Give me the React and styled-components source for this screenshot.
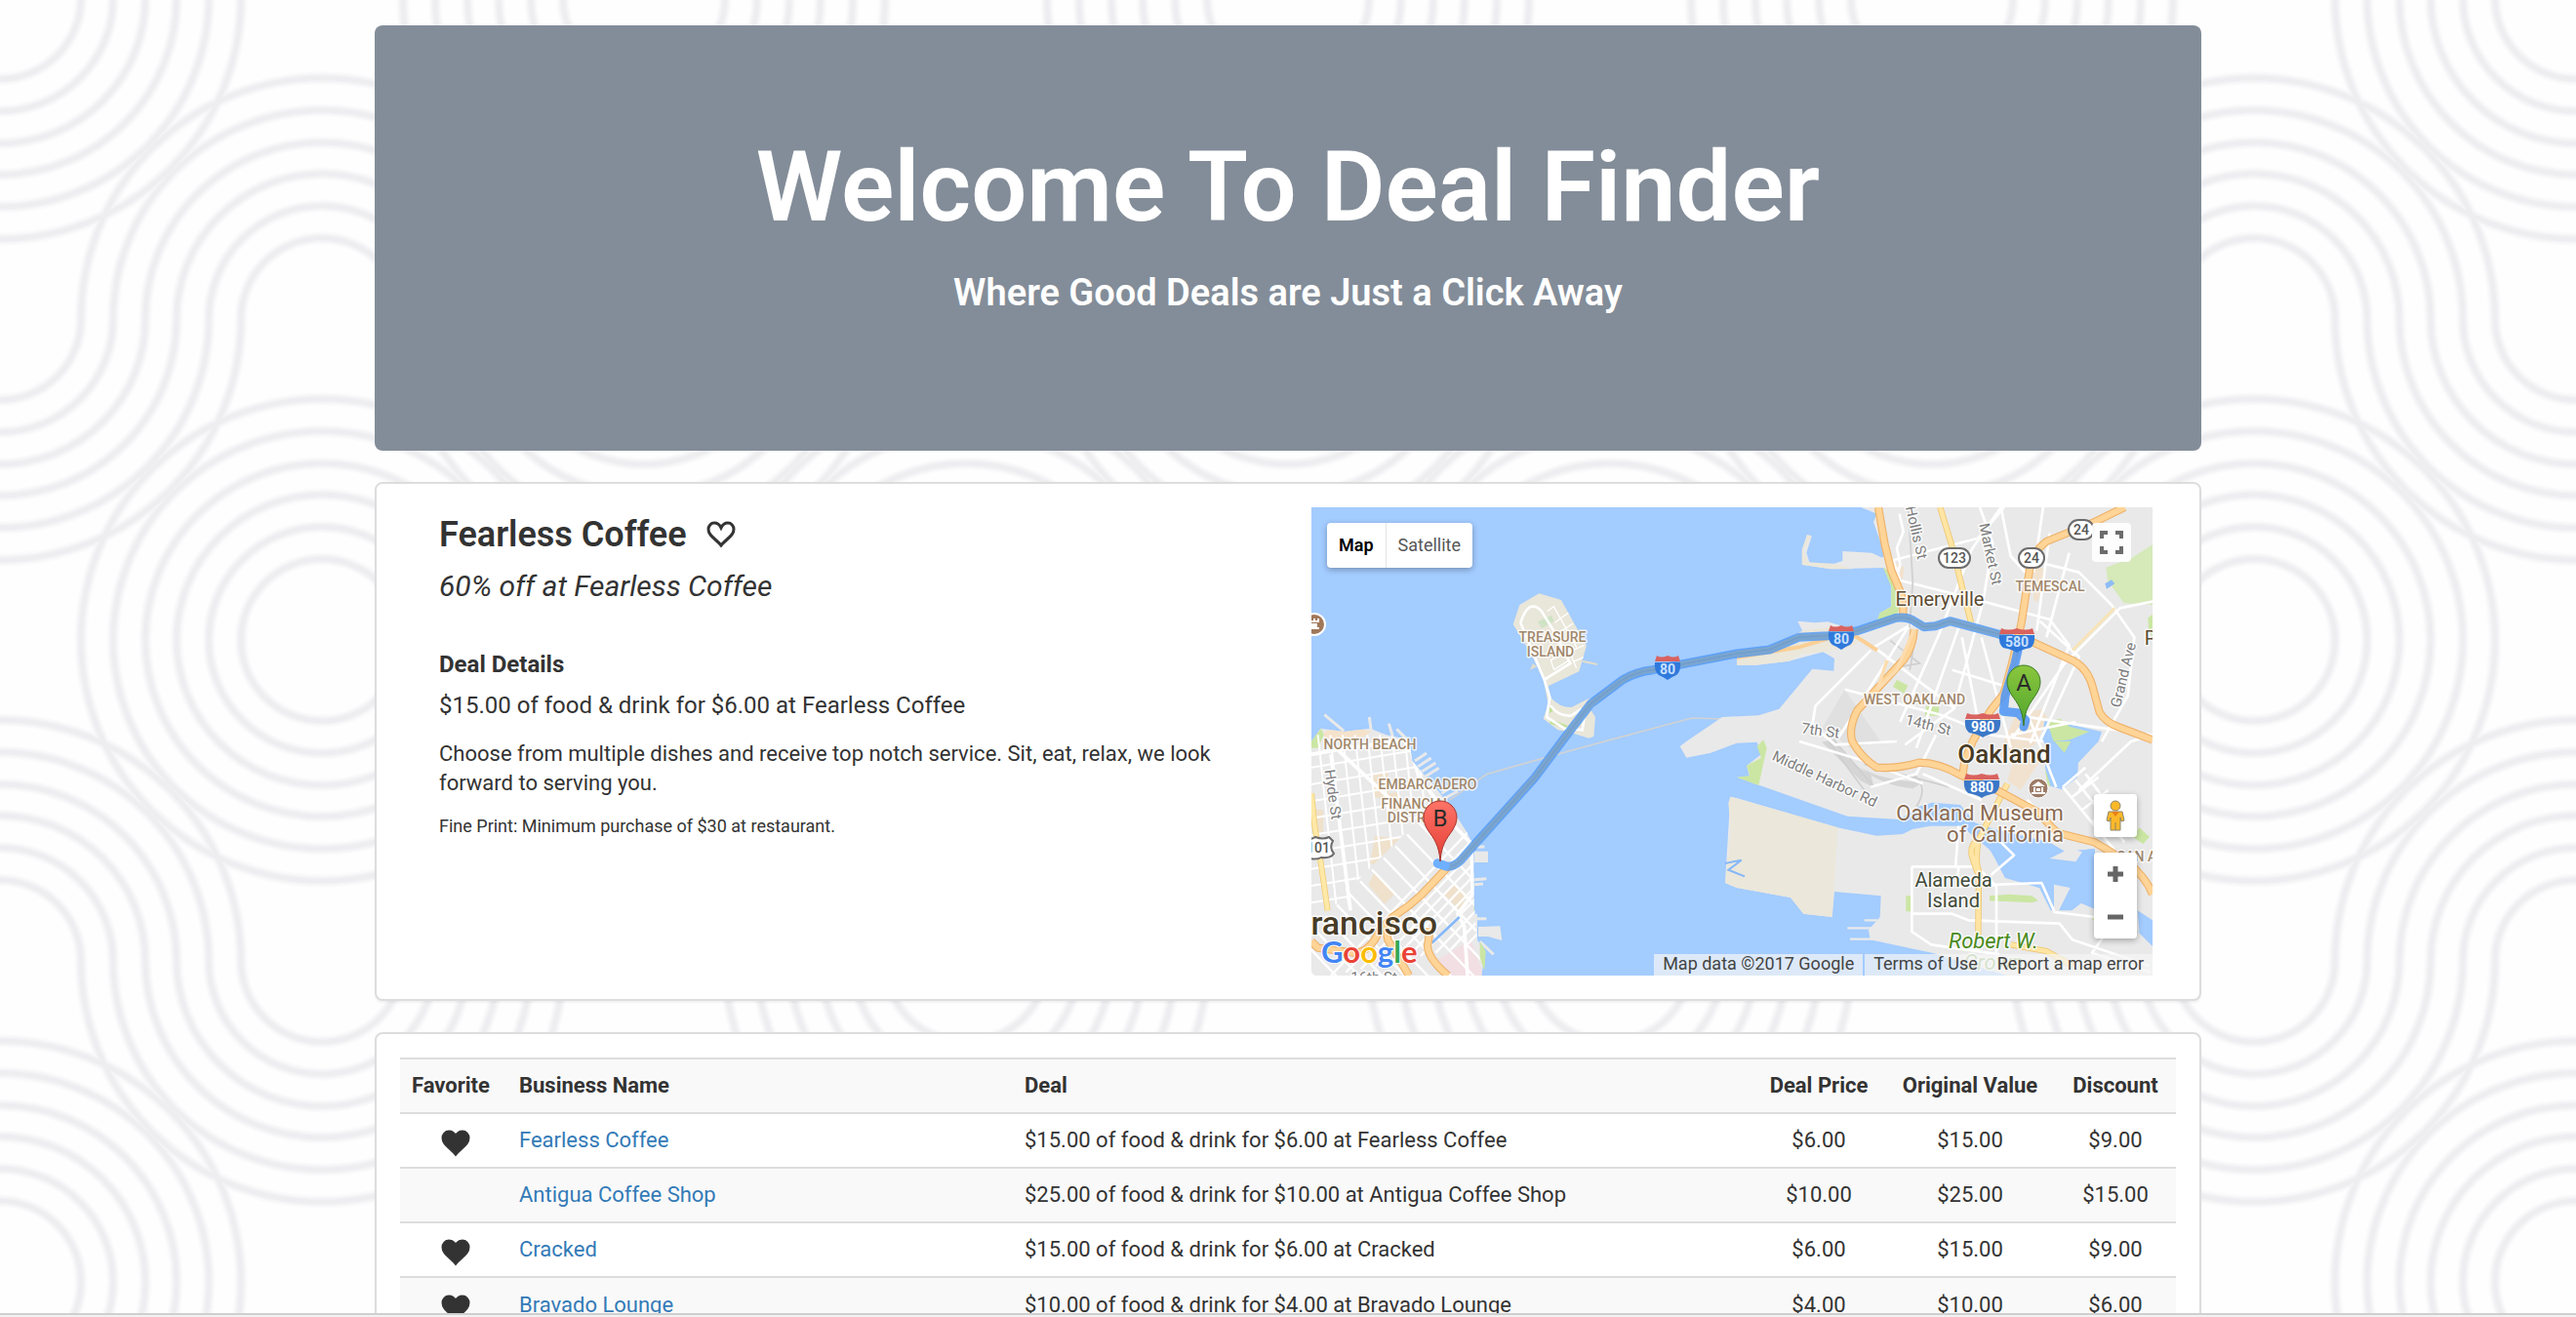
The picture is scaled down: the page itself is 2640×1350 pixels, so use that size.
import React, { useState } from "react";
import styled, { createGlobalStyle } from "styled-components";

const GlobalStyle = createGlobalStyle`
  *, *::before, *::after { box-sizing: border-box; }
  body {
    margin: 0;
    font-family: Roboto, "Liberation Sans", sans-serif;
    color: #333;
    background: #fefefe;
  }
  h1, h2, h3, h4, p { margin: 0; }
`;

const Window = styled.div`
  position: relative;
  height: 100vh;
  display: flex;
  flex-direction: column;
`;

const Backdrop = styled.svg`
  position: absolute;
  inset: 0;
  width: 100%;
  height: 100%;
`;

const Viewport = styled.div`
  position: relative;
  flex: 1;
  min-height: 0;
  overflow: hidden;
`;

const StatusEdge = styled.div`
  position: relative;
  height: 4px;
  border-top: 2px solid #cfcfcf;
  background: #f2f2f2;
`;

const Container = styled.main`
  max-width: 1872px;
  margin: 0 auto;
  padding-top: 26px;
  display: flex;
  flex-direction: column;
  gap: 32px;
`;

const Hero = styled.header`
  padding: 110px 48px 140px;
  border-radius: 8px;
  background: #838d99;
  color: #fff;
  text-align: center;
  display: flex;
  flex-direction: column;
  gap: 30px;
`;

const HeroTitle = styled.h1`
  font-size: 101px;
  line-height: 112px;
  font-weight: 600;
`;

const HeroSubtitle = styled.h2`
  font-size: 38px;
  line-height: 44px;
  font-weight: 600;
`;

const Card = styled.section`
  padding: 24px;
  border: 2px solid #ddd;
  border-radius: 8px;
  background: #fff;
  box-shadow: 0 2px 2px rgba(0, 0, 0, 0.05);
`;

const DealGrid = styled.div`
  display: grid;
  grid-template-columns: 1fr 1fr;
  gap: 48px;
  padding: 0 24px;
`;

const DealInfo = styled.div`
  padding: 8px 16px 0;
`;

const DealHeading = styled.div`
  display: flex;
  align-items: center;
  gap: 20px;
  margin-bottom: 16px;
`;

const DealName = styled.h3`
  font-size: 36px;
  line-height: 40px;
  font-weight: 600;
`;

const HeartButton = styled.button`
  display: inline-flex;
  padding: 0;
  border: 0;
  background: none;
  color: #333;
  cursor: pointer;
  vertical-align: middle;
`;

const DealTagline = styled.p`
  font-size: 30px;
  line-height: 34px;
  font-style: italic;
  margin-bottom: 50px;
`;

const DetailsTitle = styled.h4`
  font-size: 24px;
  line-height: 26px;
  font-weight: 700;
  margin-bottom: 16px;
`;

const DealOffer = styled.p`
  font-size: 24px;
  line-height: 26px;
  margin-bottom: 22px;
`;

const DealText = styled.p`
  font-size: 22px;
  line-height: 30px;
  margin-bottom: 16px;
`;

const FinePrint = styled.p`
  font-size: 18px;
  line-height: 26px;
`;

const MapFrame = styled.div`
  position: relative;
  height: 480px;
  overflow: hidden;
  background: #a3ccff;
`;

const MapCanvas = styled.svg`
  display: block;
  width: 100%;
  height: 100%;
`;

const MapTypes = styled.div`
  position: absolute;
  left: 16px;
  top: 16px;
  display: flex;
  border-radius: 4px;
  background: #fff;
  box-shadow: 0 2px 6px rgba(0, 0, 0, 0.3);
`;

const MapTypeButton = styled.button`
  height: 46px;
  padding: 0 12px 2px;
  border: 0;
  border-left: ${(p) => (p.$divided ? "1px solid #e4e4e4" : "0")};
  background: none;
  font-family: inherit;
  font-size: 18px;
  font-weight: ${(p) => (p.$active ? 600 : 400)};
  color: ${(p) => (p.$active ? "#000" : "#565656")};
`;

const MapButton = styled.button`
  width: ${(p) => p.$size}px;
  height: ${(p) => p.$size}px;
  padding: 0;
  border: 0;
  border-radius: 4px;
  background: #fff;
  display: flex;
  align-items: center;
  justify-content: center;
`;

const FullscreenSlot = styled.div`
  position: absolute;
  right: 22px;
  top: 16px;
  opacity: 0.95;
`;

const SideControls = styled.div`
  position: absolute;
  right: 16px;
  bottom: 38px;
  display: flex;
  flex-direction: column;
  gap: 16px;
`;

const ControlGroup = styled.div`
  border-radius: 4px;
  background: #fff;
  box-shadow: 0 2px 6px rgba(0, 0, 0, 0.3);
`;

const Attribution = styled.div`
  position: absolute;
  right: 0;
  bottom: 0;
  display: flex;
  gap: 2px;
  font-size: 18px;
  line-height: 20px;
  color: #444;
`;

const AttributionCell = styled.span`
  display: flex;
  gap: 20px;
  padding: 0 9px 2px;
  background: rgba(245, 245, 245, 0.7);
`;

const AttributionLink = styled.a`
  color: inherit;
  text-decoration: none;
`;

const DealTable = styled.table`
  width: 100%;
  table-layout: fixed;
  border-collapse: collapse;
  font-size: 22px;
  line-height: 30px;
`;

const Column = styled.col`
  width: ${(p) => p.$width};
`;

const Row = styled.tr`
  border-top: 2px solid #ddd;
  &:nth-child(odd) { background: ${(p) => (p.$head ? "#f9f9f9" : "transparent")}; }
  &:nth-child(even) { background: #f9f9f9; }
`;

const HeadCell = styled.th`
  height: 56px;
  padding: 12px;
  text-align: ${(p) => (p.$center ? "center" : "left")};
  font-weight: 700;
  white-space: nowrap;
`;

const Cell = styled.td`
  height: 56px;
  padding: 12px;
  text-align: ${(p) => (p.$center ? "center" : "left")};
`;

const HeartCell = styled(Cell)`
  padding: 4px 8px 0 12px;
  text-align: center;
`;

const BusinessLink = styled.a`
  color: #337ab7;
  text-decoration: none;
`;

/* ---------- page backdrop ---------- */

const RINGS = [83, 116, 149, 181, 214, 247];
const STEP = 329;
const topArc = (x, y, r) => `M${x - r} ${y}A${r} ${r} 0 0 1 ${x + r} ${y}`;
const bottomArc = (x, y, r) => `M${x - r} ${y}A${r} ${r} 0 0 0 ${x + r} ${y}`;

const wavePath = RINGS.map((r) =>
  [0, 660]
    .map(
      (x) =>
        bottomArc(x, 0, r) +
        bottomArc(x, STEP, r) +
        topArc(x, STEP * 3, r) +
        topArc(x, STEP * 4, r)
    )
    .join("") +
  topArc(330, STEP, r) +
  topArc(330, STEP * 2, r) +
  bottomArc(330, STEP * 2, r) +
  bottomArc(330, STEP * 3, r)
).join("");

function Waves() {
  return (
    <Backdrop aria-hidden="true">
      <defs>
        <pattern id="waves" width="660" height={STEP * 4} y="-2" patternUnits="userSpaceOnUse">
          <g fill="none" stroke="#8a9498">
            <path d={wavePath} strokeWidth="13" strokeOpacity="0.03" />
            <path d={wavePath} strokeWidth="9" strokeOpacity="0.05" />
            <path d={wavePath} strokeWidth="5" strokeOpacity="0.05" />
          </g>
        </pattern>
      </defs>
      <rect width="100%" height="100%" fill="url(#waves)" />
    </Backdrop>
  );
}

/* ---------- icons ---------- */

const HEART =
  "M15 25C12 21 7 18 4 14C2.500 12 2 10.500 2 8.500C2 5 4.600 2 8 2C11.200 2 13.600 4 15 7C16.400 4 18.800 2 22 2C25.400 2 28 5 28 8.500C28 10.500 27.500 12 26 14C23 18 18 21 15 25Z";

function Heart({ filled }) {
  return (
    <svg width="30" height="28" viewBox="0 0 30 28" aria-hidden="true">
      <path
        d={HEART}
        fill={filled ? "currentColor" : "none"}
        stroke="currentColor"
        strokeWidth="3"
      />
    </svg>
  );
}

/* ---------- map ---------- */

const HALO = { stroke: "#fff", strokeOpacity: 0.8, strokeWidth: 3, strokeLinejoin: "round", paintOrder: "stroke" };

const MapLabel = styled.text`
  font-family: Roboto, "Liberation Sans", sans-serif;
  font-size: ${(p) => p.$size}px;
  font-weight: ${(p) => p.$weight || 400};
  font-style: ${(p) => (p.$italic ? "italic" : "normal")};
  fill: ${(p) => p.$color};
`;

const LABELS = [
  ["TREASURE", 247, 138, 14, "#a1876a", 500],
  ["ISLAND", 245, 153, 14, "#a1876a", 500],
  ["NORTH BEACH", 60, 248, 14, "#a1876a", 500],
  ["EMBARCADERO", 119, 289, 14, "#a1876a", 500],
  ["FINANCIAL", 107, 309, 14, "#a1876a", 500],
  ["DISTRICT", 108, 323, 14, "#a1876a", 500],
  ["TEMESCAL", 757, 86, 14, "#a1876a", 500],
  ["WEST OAKLAND", 618, 202, 14, "#a1876a", 500],
  ["SAN A", 846, 363, 14, "#a1876a", 500],
  ["Emeryville", 644, 101, 20, "#5b4a33", 400],
  ["P", 860, 141, 20, "#5b4a33", 400],
  ["Oakland", 710, 262, 26, "#473b26", 500],
  ["Oakland Museum", 685, 321, 22, "#8a6a52", 400],
  ["of California", 711, 343, 22, "#8a6a52", 400],
  ["Alameda", 658, 389, 20, "#3f4a38", 400],
  ["Island", 658, 410, 20, "#3f4a38", 400],
  ["Robert W.", 699, 452, 22, "#4a8a20", 400, true],
  ["Crown", 699, 474, 22, "#8db573", 400, true],
];

const STREET_LABELS = [
  ["Hyde St", 17, 295, 82],
  ["Hollis St", 615, 27, 77],
  ["Market St", 691, 49, 78],
  ["Grand Ave", 837, 173, -76],
  ["7th St", 521, 234, 8],
  ["14th St", 631, 228, 14],
  ["Middle Harbor Rd", 524, 283, 25],
  ["16th St", 64, 487, 0],
];

/* Street geometry is stored at three units to the pixel. */
const diagonalStreets = [
  ...Array.from({ length: 12 }, (_, i) => `M${60 + i * 46} ${1440 - i * 10}l420 -440`),
  ...Array.from({ length: 13 }, (_, i) => `M${330 - i * 36} ${970 + i * 36}l330 345`),
].join("");

const uprightStreets = [
  ...Array.from({ length: 9 }, (_, i) => `M${20 + i * 38} 700l56 520`),
  ...Array.from({ length: 9 }, (_, i) => `M0 ${800 + i * 52}l360 -60`),
].join("");

const eastStreets =
  "M1808 20l12 55-20 50 10 50-15 60 40 50M1780 165l270-70 80-95M2120 0l-90 130-100 260-120 270M2120 0l30 150 90 100" +
  "M2055 0l40 110-30 180-90 330-150 110M1980 620L1730 430l130-80M1790 165l20 60 240 60 220 60 60 80-120 300" +
  "M2240 170l120 30 100 100 70 100-20 180-80 140M2586 290l-100 20-170 170-160 230M2240 350l120 110-120 260" +
  "M1720 440L1550 610l-10 60 70 60 190-10M1840 360l-220 350M2000 400l60 310M1990 370l-130 370M2060 400l90 340" +
  "M2170 640l200 30 216 30M2150 700l200-40M2270 80l-40 300M2250 0l-30 200M2330 140l-70 260M2180 580l110 280" +
  "M1640 560l300 80 150 60 160 20M1970 500l260 80M1720 860l140-40 60-120M1880 820l180 80M1500 720l200 60 180 70" +
  "M1990 980l-10 130M1846 1105h200l60 60v240M1846 1105v200l60 40 210 30M1850 1250h120l50 20 280 10 40 50 236 80" +
  "M1990 1105l-5 60 260-10 40 90 250 30M2120 1030l40 40-70 60M2200 900l120 120M2310 860l180 220M2350 840l150 190" +
  "M2380 820l120 160M2310 860l70-60M2340 890l80-60M2370 930l80-60M2400 970l80-60M2360 870l160-150 66-20M2450 1300l-50 70 180 60";

const HIGHWAYS = [
  "M1743 0L1763 115L1783 195L1813 265Q1822 300 1818 335",
  "M2500 0L2408 45L2260 105Q2215 140 2210 180L2183 355L2153 485L2128 575L2088 625L2033 720L2008 780L2003 820",
  "M2180 400L2218 415L2348 475Q2390 500 2404 560L2423 630Q2440 660 2480 675L2586 715",
  "M1853 375Q1850 430 1820 470L1678 625Q1650 680 1663 720Q1690 770 1738 800Q1800 805 1868 785Q1930 785 1998 825L2108 870L2238 940Q2290 1005 2308 1005L2408 1030L2508 1090Q2568 1140 2586 1190",
  "M425 1100L340 1190L300 1225L250 1260Q225 1290 235 1330L300 1440",
  "M250 1260L210 1300Q180 1370 130 1370L20 1355L0 1335",
  "M365 1295L357 1350Q360 1390 420 1440",
];

const ROUTE =
  "M388 1095L418 1105Q440 1105 460 1085L508 1030L688 830L770 720L858 605L958 530Q1000 505 1050 500L1308 450L1408 438L1498 400L1588 395L1678 380L1798 340Q1825 336 1845 345L1883 368L1918 365L1963 350L2113 390L2170 410";

function Interstate({ x, y, n, lit }) {
  const w = n.length > 2 ? 18 : 13;
  return (
    <g transform={`translate(${x} ${y})`}>
      <path
        d={`M${-w} -5Q${-w - 1} 4 ${-w + 4} 8Q-4 10 0 13Q4 10 ${w - 4} 8Q${w + 1} 4 ${w} -5Z`}
        fill={lit ? "#2f79dc" : "#3b78c8"}
      />
      <path d={`M${-w} -6L${-w + 2} -12Q${-w / 2} -9 0 -12Q${w / 2} -9 ${w - 2} -12L${w} -6Z`} fill="#d9625f" />
      <MapLabel y="7" textAnchor="middle" $size={14} $weight={700} $color={lit ? "#c9e0ff" : "#fff"}>
        {n}
      </MapLabel>
    </g>
  );
}

function StateRoute({ x, y, n }) {
  const w = n.length > 2 ? 32 : 26;
  return (
    <g transform={`translate(${x} ${y})`}>
      <rect x={-w / 2} y="-10" width={w} height="20" rx="10" fill="#fff" stroke="#6c6c6c" strokeWidth="2" />
      <MapLabel y="5" textAnchor="middle" $size={14} $weight={500} $color="#555">
        {n}
      </MapLabel>
    </g>
  );
}

function Marker({ x, y, letter, fill, light, edge }) {
  const id = `pin-${letter}`;
  return (
    <g transform={`translate(${x} ${y})`}>
      <linearGradient id={id} x1="0" y1="0" x2="0" y2="1">
        <stop offset="0" stopColor={light} />
        <stop offset="1" stopColor={fill} />
      </linearGradient>
      <path
        d="M0 45C-1 28 -7 21 -12 14C-15 9 -17 5 -17 0A17 17 0 0 1 17 0C17 5 15 9 12 14C7 21 1 28 0 45Z"
        fill={`url(#${id})`}
        stroke={edge}
        strokeWidth="1"
      />
      <MapLabel y="9" textAnchor="middle" $size={24} $color="#2b2b2b">
        {letter}
      </MapLabel>
    </g>
  );
}

function BayMap() {
  return (
    <MapCanvas viewBox="0 0 862 480" preserveAspectRatio="xMidYMid slice" role="img" aria-label="Route map">
      <defs>
        <clipPath id="city">
          <path d="M0 720L28 680L100 690L180 680L230 700L300 715L310 780L388 870L428 920L478 1000L498 1040L500 1220L510 1330L533 1370L523 1440H0Z" />
        </clipPath>
      </defs>
      <rect width="862" height="480" fill="#a3ccff" />
      <g transform="scale(0.33333)">
        {/* San Francisco */}
        <path
          d="M0 720L28 680L100 690L180 680L230 700L300 715L310 780L388 870L428 920L478 1000L498 1040L500 1220L468 1252L510 1250L510 1330L533 1370L523 1440H0Z"
          fill="#e9e9e9"
        />
        <path
          d="M500 1058h43v34h-43zM513 1290l67-2 6 44-43-12h-30z"
          fill="#e9e9e9"
        />
        <path
          d="M40 638l60 50M178 645l6 45M238 665l12 40M262 682l40 40M318 780l36-24M328 797l40-26M340 812l42-26M350 828l42-26M400 880l36-24M410 895l40-22M500 1044h32M500 1145l38-3M500 1160l28-2M508 1265h30M518 1335l42 40"
          stroke="#e9e9e9"
          strokeWidth="9"
        />
        <g clipPath="url(#city)">
          <path d="M38 690L110 672L185 690L150 712H40Z" fill="#f5e2cb" />
          <path d="M0 715L30 680L38 700L20 740H0Z" fill="#cbe6a3" />
          <path d="M190 820l45-10 5 90-50-10zM195 1010l90 10 20 50-40 45-85-20zM8 930h28v70H8zM388 1200l40-30 40 30-20 60-60-30zM240 880l30-5v60h-30z" fill="#efe1cb" />
          <path d="M460 1240l30-40 20 20-8 30z" fill="#d5e6cd" />
          <path d="M390 1390l100-60 40 110H400z" fill="#f2dfe4" />
          <path d={uprightStreets} stroke="#fff" strokeWidth="6" fill="none" />
          <path d="M320 970L498 1040V1250L440 1260L300 1440H60L130 1160Z" fill="#e9e9e9" />
          <path d="M195 1120l60 70-30 30-50-60zM408 1190l30-30 40 30-20 50z" fill="#efe1cb" />
          <path d={diagonalStreets} stroke="#fff" strokeWidth="7" fill="none" />
          <path d="M0 760L80 745L240 895M80 745L298 715L330 830L388 905L420 960L492 1035L496 1190L450 1250L470 1290L480 1440M60 760L120 1240" fill="none" stroke="#fff" strokeWidth="11" />
          <path d="M0 880L10 980L30 1100L50 1240" fill="none" stroke="#f1cc75" strokeWidth="18" />
          <path d="M0 880L10 980L30 1100L50 1240" fill="none" stroke="#ffe9a8" strokeWidth="13" />
          <path d="M370 1340L455 1260" stroke="#85b8f8" strokeWidth="8" />
        </g>
        <path d="M518 1335l18 30-4 60-14-40z" fill="#cbe6a3" />
        <path d="M425 900L540 820L700 775L908 718L1170 648L1310 652" fill="none" stroke="#cfd2d4" strokeWidth="5" />

        {/* Treasure Island */}
        <path
          d="M700 265L768 285L846 425L823 505L728 550L736 585Q760 615 800 615L848 590L898 580L860 625L873 645L868 705L853 710L788 690L758 685L713 650L728 605L713 530L678 455L620 360L640 300Z"
          fill="#e9e6da"
        />
        <path d="M672 500l8-20 14 10zM835 470l45 10-3 6-45-10z" fill="#e0dccd" />
        <path d="M696 352l26-12 12 18-26 14zM722 340l16-8 8 20-14 6z" fill="#cfe3c4" />
        <path d="M732 650l56 22-4 8-50-14zM733 610l10 16-12 8z" fill="#c0e095" />
        <path d="M643 355Q655 318 670 308Q690 298 708 320L748 385L796 480L716 530L643 355M716 530L733 585L723 645L778 680L833 685L840 640M735 610Q760 645 800 640L830 620" fill="none" stroke="#fff" strokeWidth="8" />
        <path d="M725 320l20-15 70 125M748 355l42-30M762 385l42-28M776 415l44-26M790 445l48-20M806 475l30-14M815 495l-25-60M745 500l45-28-14-22-40 20 10 30" fill="none" stroke="#fff" strokeWidth="4" />

        {/* East Bay */}
        <path
          d="M1690 0L1738 20L1728 45L1763 145L1755 155L1723 140L1633 135V165L1608 173L1533 175L1522 140L1538 90L1523 85L1512 135L1513 177L1598 190L1758 186L1773 205L1783 245V305L1748 325L1738 355L1708 370L1663 375L1588 352L1548 355L1495 350L1512 385L1445 415L1308 455V485L1368 485L1468 473L1573 445L1608 465L1606 503L1540 497L1438 620L1375 640L1263 645L1153 720L1133 735L1153 770L1228 755L1308 725L1370 722L1383 760L1338 795L1348 830L1308 830L1378 855L1648 950L1808 960L1868 920L1908 908L1995 915L2040 970L2100 990L2268 1030L2318 1060L2408 1050L2420 1240L2586 1330V0Z"
          fill="#e9e9e9"
        />
        <path d="M1308 485L1308 463L1408 435L1508 380L1588 370L1688 385L1673 425L1573 445L1508 450L1468 473L1368 485Z" fill="#ebe7da" />
        <path d="M1512 135l26-48-14-2-16 45v47l90 13h70l-60-16-80-5z" fill="#ebe7da" />
        <path d="M1758 186L1783 245V305L1748 325L1738 350L1800 335L1813 290L1790 200Z" fill="#cbe6a3" />
        <path d="M1308 830L1348 825L1338 795L1383 770L1370 735L1390 715L1400 740L1375 855Z" fill="#cbe6a3" />
        <path d="M2586 115L2523 155L2443 185L2448 225L2498 295L2586 300Z" fill="#d5e9b9" />
        <path d="M2440 235l20-12 10 12-25 16z" fill="#8dbcf5" />
        <path d="M1800 530l34 18-12 24-34-20zM1890 612l40 2-2 28-42-2zM2545 985l32 28-20 22-30-20zM2572 340l14-10v70l-12-20z" fill="#cbe6a3" />
        <path d="M1785 165l38 20-8 55-30-20zM2165 640l80-20 20 30-40 80-100 50-10-30zM2220 180l40 10-26 100-14-4zM2170 740l70 40-60 90-40-30z" fill="#f1e2cf" />
        <path d="M1640 560l110 160-90 20-90-60z" fill="#dfe0df" />
        <path d="M1570 722q60 60 120 120l40 20-10-40q-80-40-110-110zM1690 800q60 40 190 45l-30 20q-100-10-160-65z" fill="#d5d5d5" />
        <path d="M1590 720l110 150M1610 720l120 140M1700 790l260 70M1860 920q40-60-10-100M1780 410l90 70-60 10M1850 440l-10 60" fill="none" stroke="#cfcfcf" strokeWidth="5" />

        {/* Alameda */}
        <path
          d="M1308 895L1618 985L1738 1010L1818 1005L1848 990L1903 980L1998 980L2088 1055L2133 1140L2238 1170L2273 1240L2338 1240L2370 1215L2586 1330V1440H2138L2008 1400L1908 1370L1718 1330L1713 1300L1748 1260L1751 1195L1608 1182L1601 1260L1513 1250L1473 1200L1308 1170L1272 1155L1288 890Z"
          fill="#e9e9e9"
        />
        <path d="M1288 890L1308 895L1618 985L1601 1260L1513 1250L1473 1200L1308 1170L1272 1155L1290 1000L1282 910Z" fill="#ebe7da" />
        <path d="M1272 1095l50-10-40 30 50 20" fill="none" stroke="#85b8f8" strokeWidth="6" />
        <path d="M1648 1294h80M1656 1328h80M1700 1270h40" stroke="#e9e9e9" strokeWidth="7" />
        <path d="M2083 1050L2130 1010L2268 1030L2318 1060L2408 1050L2420 1240L2372 1220L2300 1180L2238 1170L2170 1150L2133 1120Z" fill="#a3ccff" />
        <path d="M2270 1080l60-30 40 10-20 30zM2283 1160l50 10-40 80-10-5z" fill="#e9e9e9" />
        <path d="M2085 1195l60-5 70 5 20 15-20 6-130-6zM1828 1195h18v48h-18zM2400 1250l10 20-8-2z" fill="#cbe6a3" />
        <path d="M2540 1240l46 30v80l-40-40z" fill="#a3ccff" />
        <path d="M2255 650L2300 660L2430 690L2420 720L2358 785L2355 830L2308 868L2265 855L2256 800L2262 740L2246 710Z" fill="#a3ccff" />
        <path d="M2262 660l40-10 30 25 60 15-60 25-50 5z" fill="#cbe6a3" />
        <path d="M2285 720h50l-20 35zM2255 800l8 55 10 4z" fill="#cbe6a3" />

        <path d={eastStreets} fill="none" stroke="#fff" strokeWidth="8" strokeLinejoin="round" />
        <path d="M1835 0l14 230-10 140" fill="none" stroke="#d3d3d3" strokeWidth="6" />
        <path d="M2340 440l130-130" stroke="#f8e4b8" strokeWidth="9" />
        <path d="M1933 0L1968 115L2028 355M2140 850L2050 1025Q2040 1090 2052 1120L2050 1320M2060 1020Q2025 1030 2030 1070Q2045 1120 2052 1130M2150 1345L2260 1365L2340 1410" fill="none" stroke="#edc673" strokeWidth="19" />
        <path d="M1933 0L1968 115L2028 355M2140 850L2050 1025Q2040 1090 2052 1120L2050 1320M2060 1020Q2025 1030 2030 1070Q2045 1120 2052 1130M2150 1345L2260 1365L2340 1410" fill="none" stroke="#ffe5a3" strokeWidth="14" />

        {HIGHWAYS.map((d) => (
          <path key={d} d={d} fill="none" stroke="#eeb36c" strokeWidth="25" strokeLinejoin="round" />
        ))}
        {HIGHWAYS.map((d) => (
          <path key={d} d={d} fill="none" stroke="#ffd497" strokeWidth="18" strokeLinejoin="round" />
        ))}
        <path d="M1308 462L1500 430L1600 400L1670 395L1740 440" fill="none" stroke="#fbcf94" strokeWidth="12" />
        <path d="M1853 375L1800 500L1740 560L1770 470" fill="none" stroke="#fcdcae" strokeWidth="10" />
      </g>

      {LABELS.map(([text, x, y, size, color, weight, italic]) => (
        <MapLabel key={text} x={x} y={y} textAnchor="middle" $size={size} $color={color} $weight={weight} $italic={italic} {...HALO}>
          {text}
        </MapLabel>
      ))}
      {STREET_LABELS.map(([text, x, y, angle]) => (
        <MapLabel key={text} transform={`translate(${x} ${y}) rotate(${angle})`} textAnchor="middle" $size={15} $color="#7d7d7d" {...HALO}>
          {text}
        </MapLabel>
      ))}
      <MapLabel x="129" y="438" textAnchor="end" $size={34} $weight={500} $color="#473b26" {...HALO}>
        rancisco
      </MapLabel>

      <Interstate x={688} y={223} n="980" />
      <Interstate x={687} y={285} n="880" />
      <StateRoute x={789} y={23} n="24" />
      <StateRoute x={738} y={52} n="24" />
      <StateRoute x={659} y={52} n="123" />
      <g>
        <path d="M-6 339Q0 341 4 338Q12 341 18 338L22 342Q18 349 23 355Q20 360 10 359Q5 362 -6 359Z" fill="#fff" stroke="#6c6c6c" strokeWidth="2" />
        <MapLabel x="7" y="354" textAnchor="middle" $size={14} $weight={500} $color="#555">101</MapLabel>
      </g>

      <circle cx="745" cy="288" r="10" fill="#9c7b66" stroke="#fff" strokeWidth="1" />
      <path d="M738 286l7-5 7 5zM740 287h2v5h-2zM748 287h2v5h-2zM738 292h14v2h-14zM743 288h4v3h-4z" fill="#fff" />
      <circle cx="3" cy="120" r="11" fill="#a0785a" stroke="#fff" strokeWidth="2" />
      <path d="M-2 114h2v2h2v-2h2v2h2v-2h2v4h-10zM-1 119h7v4h2v2h-10z" fill="#fff" />

      <g transform="scale(0.33333)" fill="none" strokeLinejoin="round" strokeLinecap="round">
        <path d={ROUTE} stroke="#4a97fb" strokeOpacity="0.8" strokeWidth="27" />
        <path d={ROUTE} stroke="#7aa5d0" strokeWidth="19" />
        <path d={ROUTE} stroke="#6796c5" strokeWidth="2" />
        <path d="M388 1095L412 1103" stroke="#6eb0ff" strokeWidth="27" />
        <path d="M2172 440L2163 480L2133 580L2128 628L2172 632L2196 655L2190 675" stroke="#4c94f4" strokeOpacity="0.85" strokeWidth="27" />
      </g>
      <Interstate x={365} y={164} n="80" lit />
      <Interstate x={543} y={133} n="80" lit />
      <Interstate x={723} y={136} n="580" lit />

      <Marker x={730} y={179} letter="A" fill="#4fa52b" light="#8bc63f" edge="#3c7a22" />
      <Marker x={132} y={318} letter="B" fill="#e23e34" light="#ff7468" edge="#a8332c" />

      <text x="10" y="467" fontFamily="Lato, sans-serif" fontSize="31" fontWeight="700" stroke="#fff" strokeWidth="2" paintOrder="stroke">
        <tspan fill="#4285f4">G</tspan>
        <tspan fill="#ea4335">o</tspan>
        <tspan fill="#fbbc05">o</tspan>
        <tspan fill="#4285f4">g</tspan>
        <tspan fill="#34a853">l</tspan>
        <tspan fill="#ea4335">e</tspan>
      </text>
    </MapCanvas>
  );
}

function DealMap() {
  return (
    <MapFrame>
      <BayMap />
      <MapTypes>
        <MapTypeButton type="button" $active>Map</MapTypeButton>
        <MapTypeButton type="button" $divided>Satellite</MapTypeButton>
      </MapTypes>
      <FullscreenSlot>
        <MapButton type="button" $size={40} aria-label="Toggle fullscreen">
          <svg width="26" height="26" viewBox="0 0 26 26" fill="none" stroke="#666" strokeWidth="4" aria-hidden="true">
            <path d="M3 9V3h6M17 3h6v6M23 17v6h-6M9 23H3v-6" />
          </svg>
        </MapButton>
      </FullscreenSlot>
      <SideControls>
        <ControlGroup>
          <MapButton type="button" $size={44} aria-label="Street View">
            <svg width="20" height="32" viewBox="0 0 20 32" aria-hidden="true">
              <path d="M3 12h14l2 9-3 1-1-4v13H5V18l-1 4-3-1z" fill="#fbb829" stroke="#8e8569" strokeWidth="1" />
              <path d="M6 12h8l-4 5z" fill="#e8811a" />
              <path d="M10 23v8" stroke="#8e8569" strokeWidth="1" />
              <circle cx="10" cy="6" r="5" fill="#fbb829" stroke="#8e8569" strokeWidth="1" />
            </svg>
          </MapButton>
        </ControlGroup>
        <ControlGroup>
          <MapButton type="button" $size={44} aria-label="Zoom in">
            <svg width="18" height="18" viewBox="0 0 18 18" stroke="#666" strokeWidth="5" aria-hidden="true">
              <path d="M9 1v16M1 9h16" />
            </svg>
          </MapButton>
          <MapButton type="button" $size={44} aria-label="Zoom out">
            <svg width="18" height="18" viewBox="0 0 18 18" stroke="#666" strokeWidth="5" aria-hidden="true">
              <path d="M1 9h16" />
            </svg>
          </MapButton>
        </ControlGroup>
      </SideControls>
      <Attribution>
        <AttributionCell>Map data ©2017 Google</AttributionCell>
        <AttributionCell>
          <AttributionLink href="#terms">Terms of Use</AttributionLink>
          <AttributionLink href="#report">Report a map error</AttributionLink>
        </AttributionCell>
      </Attribution>
    </MapFrame>
  );
}

/* ---------- page ---------- */

const DEALS = [
  { name: "Fearless Coffee", price: 6, value: 15, favorite: true },
  { name: "Antigua Coffee Shop", price: 10, value: 25, favorite: false },
  { name: "Cracked", price: 6, value: 15, favorite: true },
  { name: "Bravado Lounge", price: 4, value: 10, favorite: true },
];

const money = (n) => `$${n.toFixed(2)}`;
const offer = (d) => `${money(d.value)} of food & drink for ${money(d.price)} at ${d.name}`;

export default function App() {
  const [saved, setSaved] = useState(false);
  return (
    <Window>
      <GlobalStyle />
      <Waves />
      <Viewport>
        <Container>
          <Hero>
            <HeroTitle>Welcome To Deal Finder</HeroTitle>
            <HeroSubtitle>Where Good Deals are Just a Click Away</HeroSubtitle>
          </Hero>

          <Card>
            <DealGrid>
              <DealInfo>
                <DealHeading>
                  <DealName>Fearless Coffee</DealName>
                  <HeartButton type="button" aria-label="Add to favorites" onClick={() => setSaved(!saved)}>
                    <Heart filled={saved} />
                  </HeartButton>
                </DealHeading>
                <DealTagline>60% off at Fearless Coffee</DealTagline>
                <DetailsTitle>Deal Details</DetailsTitle>
                <DealOffer>{offer(DEALS[0])}</DealOffer>
                <DealText>
                  Choose from multiple dishes and receive top notch service. Sit, eat, relax, we look forward to
                  serving you.
                </DealText>
                <FinePrint>Fine Print: Minimum purchase of $30 at restaurant.</FinePrint>
              </DealInfo>
              <DealMap />
            </DealGrid>
          </Card>

          <Card>
            <DealTable>
              <colgroup>
                <Column $width="110px" />
                <Column $width="518px" />
                <Column $width="auto" />
                <Column $width="136px" />
                <Column $width="174px" />
                <Column $width="124px" />
              </colgroup>
              <thead>
                <Row $head>
                  <HeadCell scope="col">Favorite</HeadCell>
                  <HeadCell scope="col">Business Name</HeadCell>
                  <HeadCell scope="col">Deal</HeadCell>
                  <HeadCell scope="col" $center>Deal Price</HeadCell>
                  <HeadCell scope="col" $center>Original Value</HeadCell>
                  <HeadCell scope="col" $center>Discount</HeadCell>
                </Row>
              </thead>
              <tbody>
                {DEALS.map((d) => (
                  <Row key={d.name}>
                    <HeartCell>
                      {d.favorite && (
                        <HeartButton type="button" aria-label={`Remove ${d.name} from favorites`}>
                          <Heart filled />
                        </HeartButton>
                      )}
                    </HeartCell>
                    <Cell>
                      <BusinessLink href="#deal">{d.name}</BusinessLink>
                    </Cell>
                    <Cell>{offer(d)}</Cell>
                    <Cell $center>{money(d.price)}</Cell>
                    <Cell $center>{money(d.value)}</Cell>
                    <Cell $center>{money(d.value - d.price)}</Cell>
                  </Row>
                ))}
              </tbody>
            </DealTable>
          </Card>
        </Container>
      </Viewport>
      <StatusEdge />
    </Window>
  );
}
